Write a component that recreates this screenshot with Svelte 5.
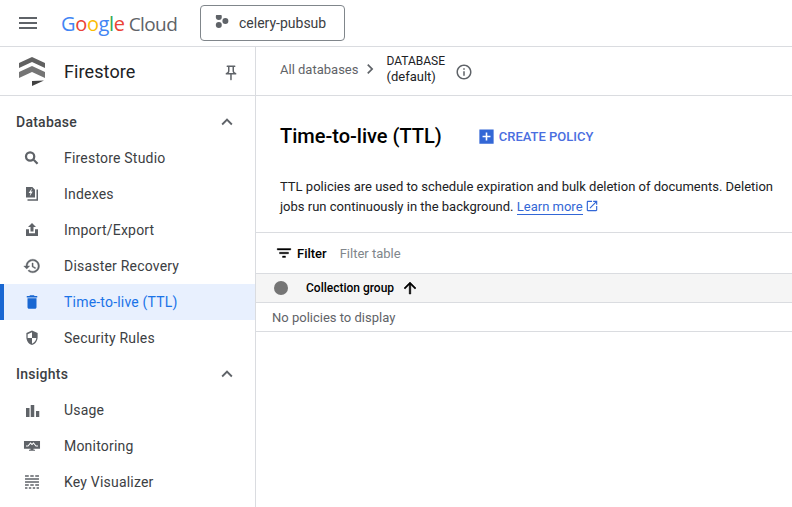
<script>
  const icons = {
    search: 'M9.5 3a7 7 0 1 0 0 14a7 7 0 1 0 0-14zm0 3a4 4 0 1 1 0 8a4 4 0 1 1 0-8zM13.5 15.5L18.3 20.7L20.5 18.5L15.5 13.5z',
    indexes: 'M4 2.7h8.5l3.5 3.5v10.5H4zM11.7 4.5 7.5 10.7H10L9 15l4-6.5h-2.5l1.7-4zM18 6h2v15H6v-2h12z',
    upload: 'M12 2.7 17.3 8H14v6h-4V8H6.7zM4 11h4v5.2h8V11h4v9H4z',
    history: 'M13 3c-4.97 0-9 4.03-9 9H1l3.89 3.89.07.14L9 12H6c0-3.87 3.13-7 7-7s7 3.13 7 7-3.13 7-7 7c-1.93 0-3.68-.79-4.94-2.06l-1.42 1.42C8.27 19.99 10.51 21 13 21c4.97 0 9-4.03 9-9s-4.03-9-9-9zm-1 5v5l4.28 2.54.72-1.21-3.5-2.08V8H12z',
    trash: 'M6 19c0 1.1.9 2 2 2h8c1.1 0 2-.9 2-2V7H6v12zM19 4h-3.5l-1-1h-5l-1 1H5v2h14V4z',
    shield: 'M12 2 4.5 5.4v5.6c0 4.8 3.2 9.2 7.5 10.4 4.3-1.2 7.5-5.6 7.5-10.4V5.4zM12 12h5.8c-.5 3.5-2.8 6.5-5.8 7.5zM12 4.3V12H6.2V6.9z',
    bars: 'M4 9.3h4.7v12H4zM10.3 5.3H15v16h-4.7zM17.3 13.3h4.4v8h-4.4z',
    monitor: 'M1.3 5.3h21.4v10.2H14V17h2v1.2H8V17h2v-1.5H1.3zM4 12.6h3l3-3.6 2 2 2-2 3 3.6h3v-1.3h-2.4l-3.6-4.2-2 2-2-2-3.6 4.2H4z',
    grid: 'M2.7 3h5v2h-5zM9.7 3h4.6v2H9.7zM16.3 3h5v2h-5zM2.7 7h18.6v2H2.7zM2.7 11h18.6v2H2.7zM2.7 15h5v2h-5zM9.7 15h4.6v2H9.7zM16.3 15h5v2h-5zM2.7 19h3.2v2H2.7zM7.8 19h3.2v2H7.8zM13 19h3.2v2H13zM18.1 19h3.2v2h-3.2z'
  };

  const groups = [
    {
      title: 'Database',
      items: [
        { label: 'Firestore Studio', icon: 'search' },
        { label: 'Indexes', icon: 'indexes' },
        { label: 'Import/Export', icon: 'upload' },
        { label: 'Disaster Recovery', icon: 'history' },
        { label: 'Time-to-live (TTL)', icon: 'trash', active: true },
        { label: 'Security Rules', icon: 'shield' }
      ]
    },
    {
      title: 'Insights',
      items: [
        { label: 'Usage', icon: 'bars' },
        { label: 'Monitoring', icon: 'monitor' },
        { label: 'Key Visualizer', icon: 'grid' }
      ]
    }
  ];
</script>

<div class="page">
  <header class="topbar">
    <button class="menu" aria-label="Menu">
      <svg viewBox="0 0 24 24" width="24" height="24"><path d="M3 18h18v-2H3v2zm0-5h18v-2H3v2zm0-7v2h18V6H3z" /></svg>
    </button>
    <div class="logo">
      <span class="word"><span class="blue">G</span><span class="red">o</span><span class="yellow">o</span><span class="blue">g</span><span class="green">l</span><span class="red">e</span></span>
      <span class="cloud">Cloud</span>
    </div>
    <button class="project">
      <svg viewBox="0 1 16 16" width="16" height="16">
        <circle cx="3.8" cy="2.9" r="3" />
        <circle cx="3.8" cy="10.9" r="3" />
        <circle cx="10.4" cy="6.9" r="3" />
      </svg>
      celery-pubsub
    </button>
  </header>

  <div class="body">
    <aside class="sidebar">
      <div class="product">
        <svg class="product-logo" viewBox="0 0 28 30" width="28" height="30">
          <path fill="#616161" d="M14 1 27 7v5L14 6 1 12V7z" />
          <path fill="#757575" d="M14 10 27 16v6L14 16 1 22v-6z" />
          <path fill="#424242" d="M14 25 26 24.5 14 30z" />
        </svg>
        <span class="product-name">Firestore</span>
        <svg class="pin" viewBox="0 0 24 24" width="18" height="18"><path d="M14 4v5c0 1.12.37 2.16 1 3H9c.65-.86 1-1.9 1-3V4h4m3-2H7c-.55 0-1 .45-1 1s.45 1 1 1h1v5c0 1.66-1.34 3-3 3v2h5.97v7l1 1 1-1v-7H19v-2c-1.66 0-3-1.34-3-3V4h1c.55 0 1-.45 1-1s-.45-1-1-1z" /></svg>
      </div>
      <nav class="nav">
        {#each groups as group}
          <div class="group-title">
            <span>{group.title}</span>
            <svg viewBox="0 0 24 24" width="22" height="22"><path d="M12 8l-6 6 1.41 1.41L12 10.83l4.59 4.58L18 14z" /></svg>
          </div>
          {#each group.items as item}
            <a class="item" class:active={item.active} href="#top">
              <svg viewBox="0 0 24 24" width="18" height="18"><path class:bold={item.icon === 'history'} fill-rule="evenodd" d={icons[item.icon]} /></svg>
              <span>{item.label}</span>
            </a>
          {/each}
        {/each}
      </nav>
    </aside>

    <main class="main">
      <div class="crumbs">
        <span class="crumb-link">All databases</span>
        <svg class="chev" viewBox="0 0 24 24" width="20" height="20"><path d="M10 6L8.59 7.41 13.17 12l-4.58 4.59L10 18l6-6z" /></svg>
        <div class="crumb-current">
          <div>DATABASE</div>
          <div>(default)</div>
        </div>
        <svg class="info" viewBox="0 0 24 24" width="18" height="18"><path d="M11 7h2v2h-2zm0 4h2v6h-2zm1-9C6.48 2 2 6.48 2 12s4.48 10 10 10 10-4.48 10-10S17.52 2 12 2zm0 18c-4.41 0-8-3.59-8-8s3.59-8 8-8 8 3.59 8 8-3.59 8-8 8z" /></svg>
      </div>

      <div class="title-row">
        <h1>Time-to-live (TTL)</h1>
        <button class="create">
          <svg viewBox="0 0 24 24" width="19" height="19"><path d="M3 3h18v18H3zM11 7v4H7v2h4v4h2v-4h4v-2h-4V7z" fill-rule="evenodd" /></svg>
          CREATE POLICY
        </button>
      </div>

      <p class="desc">
        TTL policies are used to schedule expiration and bulk deletion of documents. Deletion jobs run continuously in the background.
        <a href="#top">Learn more</a><svg class="ext" viewBox="0 0 24 24" width="14" height="14"><path d="M19 19H5V5h7V3H5c-1.11 0-2 .9-2 2v14c0 1.1.89 2 2 2h14c1.1 0 2-.9 2-2v-7h-2v7zM14 3v2h3.59l-9.83 9.83 1.41 1.41L19 6.41V10h2V3h-7z" /></svg>
      </p>

      <div class="filter">
        <svg viewBox="0 0 24 24" width="18" height="18"><path d="M10 18h4v-2h-4v2zM3 6v2h18V6H3zm3 7h12v-2H6v2z" /></svg>
        <strong>Filter</strong>
        <span>Filter table</span>
      </div>

      <div class="thead">
        <span class="dot"></span>
        <span class="col">Collection group</span>
        <svg viewBox="0 0 24 24" width="18" height="18"><path d="M4 12l1.41 1.41L11 7.83V20h2V7.83l5.58 5.59L20 12l-8-8-8 8z" /></svg>
      </div>
      <div class="empty">No policies to display</div>
    </main>
  </div>
</div>

<style>
  :global(body) {
    margin: 0;
    background: #fff;
    font-family: Roboto, "Liberation Sans", sans-serif;
    overflow: hidden;
  }

  .page {
    width: 792px;
    height: 507px;
    overflow: hidden;
    color: #202124;
  }

  button {
    font-family: inherit;
    background: none;
    border: none;
    padding: 0;
  }

  .topbar {
    height: 46px;
    border-bottom: 1px solid #dadce0;
    display: flex;
    align-items: center;
    padding-left: 16px;
  }

  .menu {
    width: 24px;
    height: 24px;
    margin-right: 21px;
  }

  .menu svg {
    fill: #5f6368;
    display: block;
  }

  .logo {
    width: 115px;
    margin-right: 24px;
    font-family: "Open Sans", sans-serif;
    font-size: 20px;
    white-space: nowrap;
    display: flex;
    align-items: baseline;
    gap: 4px;
  }

  .word {
    letter-spacing: -0.35px;
  }

  .blue { color: #4285f4; }
  .red { color: #ea4335; }
  .yellow { color: #fbbc04; }
  .green { color: #34a853; }
  .cloud {
    color: #5f6368;
    font-size: 19px;
    letter-spacing: -0.6px;
  }

  .project {
    width: 145px;
    height: 36px;
    box-sizing: border-box;
    border: 1px solid #80868b;
    border-radius: 4px;
    display: flex;
    align-items: center;
    gap: 8px;
    padding-left: 14px;
    font-size: 14px;
    color: #3c4043;
  }

  .project svg {
    fill: #5f6368;
  }

  .body {
    display: flex;
    height: 460px;
  }

  .sidebar {
    width: 255px;
    flex: none;
    border-right: 1px solid #dadce0;
  }

  .product {
    height: 48px;
    border-bottom: 1px solid #dadce0;
    display: flex;
    align-items: center;
    padding-left: 18px;
    padding-right: 15px;
    margin-bottom: 8px;
  }

  .product-logo {
    margin-right: 18px;
  }

  .product-name {
    flex: 1;
    font-size: 18px;
    letter-spacing: 0.1px;
    color: #202124;
  }

  .pin {
    fill: #5f6368;
    margin-top: 3px;
  }

  .group-title {
    height: 36px;
    display: flex;
    align-items: center;
    justify-content: space-between;
    padding: 0 17px 0 16px;
    font-size: 14px;
    font-weight: 500;
    letter-spacing: 0.25px;
    color: #3c4043;
  }

  .group-title svg {
    fill: #5f6368;
  }

  .item {
    height: 36px;
    display: flex;
    align-items: center;
    padding-left: 23px;
    font-size: 14px;
    letter-spacing: 0.2px;
    color: #3c4043;
    text-decoration: none;
  }

  .item svg {
    fill: #5f6368;
    margin-right: 23px;
  }

  .bold {
    stroke: #5f6368;
    stroke-width: 0.5;
  }

  .item.active {
    background: #e8f0fe;
    color: #1a73e8;
    box-shadow: inset 4px 0 0 #1967d2;
  }

  .item.active svg {
    fill: #1967d2;
  }

  .main {
    flex: 1;
    min-width: 0;
  }

  .crumbs {
    height: 49px;
    box-sizing: border-box;
    border-bottom: 1px solid #dadce0;
    display: flex;
    align-items: center;
    padding: 0 0 4px 24px;
    font-size: 13px;
  }

  .crumb-link {
    color: #5f6368;
  }

  .chev {
    fill: #5f6368;
    margin: 0 6px 0 2px;
  }

  .crumb-current {
    font-size: 12px;
    line-height: 16px;
    color: #202124;
  }

  .crumb-current div:last-child {
    font-size: 13px;
  }

  .info {
    fill: #5f6368;
    margin: 6px 0 0 10px;
  }

  .title-row {
    display: flex;
    align-items: center;
    padding: 24px 24px 0;
    height: 32px;
  }

  h1 {
    margin: 0 35px 0 0;
    font-size: 20px;
    font-weight: 500;
    color: #000;
  }

  .create {
    display: flex;
    align-items: center;
    gap: 3px;
    font-size: 13px;
    font-weight: 500;
    color: #4a6ee0;
  }

  .create svg {
    fill: #3367d6;
  }

  .desc {
    margin: 25px 0 0;
    padding: 0 16px 0 24px;
    font-size: 13px;
    line-height: 20px;
    color: #202124;
    height: 55px;
    border-bottom: 1px solid #dadce0;
  }

  .desc a {
    color: #3367d6;
    text-decoration: none;
    border-bottom: 1px solid #3367d6;
  }

  .ext {
    fill: #3367d6;
    vertical-align: -2px;
    margin-left: 2px;
  }

  .filter {
    height: 40px;
    display: flex;
    align-items: center;
    padding-left: 19px;
    border-bottom: 1px solid #dadce0;
    font-size: 13px;
  }

  .filter svg {
    margin-right: 4px;
    stroke: #000;
    stroke-width: 0.5;
  }

  .filter strong {
    font-weight: 500;
    margin-right: 13px;
    color: #000;
  }

  .filter span {
    color: #80868b;
  }

  .thead {
    height: 28px;
    background: #f5f5f5;
    border-bottom: 1px solid #dadce0;
    display: flex;
    align-items: center;
    padding-left: 18px;
    font-size: 12px;
    font-weight: 500;
    color: #000;
  }

  .thead svg {
    stroke: #000;
    stroke-width: 0.7;
  }

  .dot {
    width: 14px;
    height: 14px;
    border-radius: 50%;
    background: #757575;
    margin-right: 18px;
  }

  .col {
    margin-right: 7px;
  }

  .empty {
    height: 28px;
    line-height: 30px;
    padding-left: 16px;
    border-bottom: 1px solid #dadce0;
    font-size: 13px;
    color: #5f6368;
  }
</style>
